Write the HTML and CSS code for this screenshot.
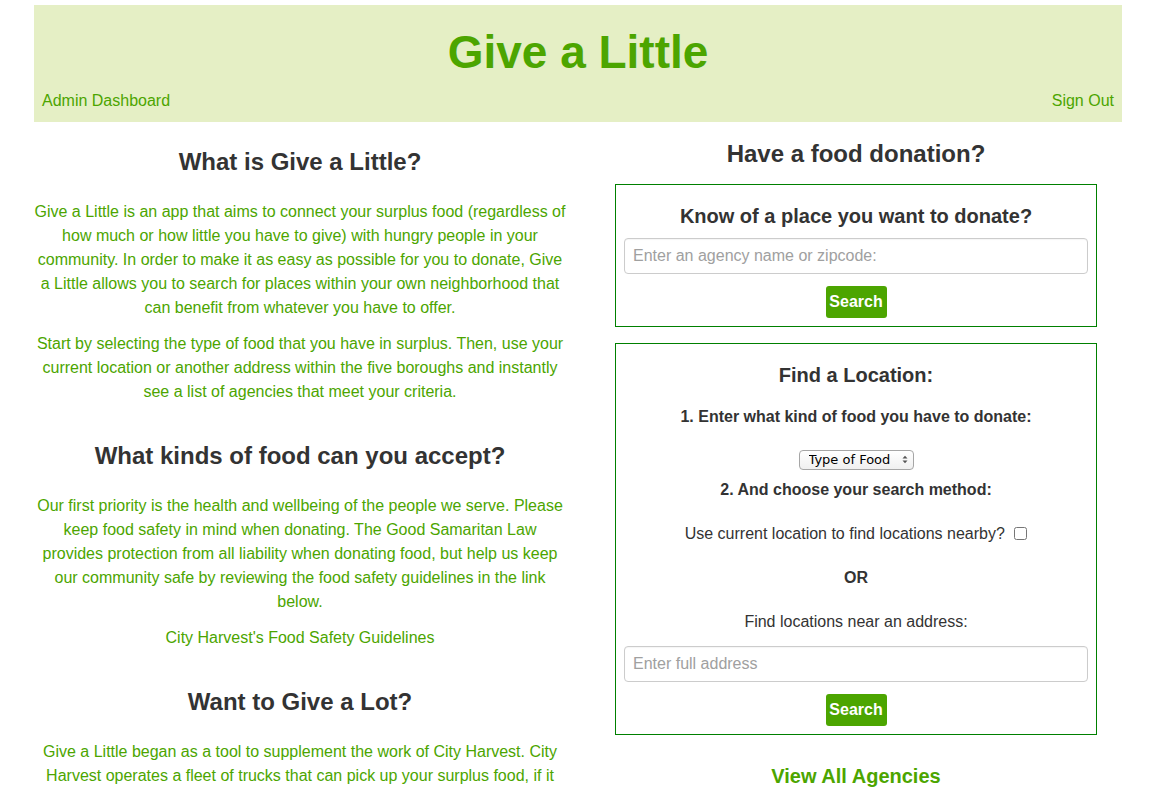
FILE: index.html
```html
<!DOCTYPE html>
<html lang="en">
<head>
<meta charset="utf-8">
<title>Give a Little</title>
<link rel="stylesheet" href="styles.css">
</head>
<body>
<div class="page">
  <header class="masthead">
    <h1 class="brand">Give a Little</h1>
    <nav class="nav">
      <a href="#" class="nav-link">Admin Dashboard</a>
      <a href="#" class="nav-link">Sign Out</a>
    </nav>
  </header>

  <main class="columns">
    <section class="col-info">
      <h3 class="heading">What is Give a Little?</h3>
      <p class="copy">Give a Little is an app that aims to connect your surplus food (regardless of how much or how little you have to give) with hungry people in your community. In order to make it as easy as possible for you to donate, Give a Little allows you to search for places within your own neighborhood that can benefit from whatever you have to offer.</p>
      <p class="copy">Start by selecting the type of food that you have in surplus. Then, use your current location or another address within the five boroughs and instantly see a list of agencies that meet your criteria.</p>

      <h3 class="heading heading-spaced">What kinds of food can you accept?</h3>
      <p class="copy">Our first priority is the health and wellbeing of the people we serve. Please keep food safety in mind when donating. The Good Samaritan Law provides protection from all liability when donating food, but help us keep our community safe by reviewing the food safety guidelines in the link below.</p>
      <p class="copy"><a href="#" class="text-link">City Harvest's Food Safety Guidelines</a></p>

      <h3 class="heading heading-spaced">Want to Give a Lot?</h3>
      <p class="copy">Give a Little began as a tool to supplement the work of City Harvest. City Harvest operates a fleet of trucks that can pick up your surplus food, if it meets their requirements for donation. Learn more about donating with City Harvest below.</p>
    </section>

    <section class="col-search">
      <h3 class="heading heading-right">Have a food donation?</h3>

      <div class="panel">
        <h4 class="panel-title">Know of a place you want to donate?</h4>
        <input class="field" type="text" placeholder="Enter an agency name or zipcode:">
        <div class="btn-row"><button class="btn">Search</button></div>
      </div>

      <div class="panel panel-second">
        <h4 class="panel-title">Find a Location:</h4>
        <p class="step">1. Enter what kind of food you have to donate:</p>
        <div class="select-row">
          <span class="select-wrap">
            <select class="select">
              <option>Type of Food</option>
            </select>
            <svg class="select-arrows" width="6" height="9" viewBox="0 0 6 9"><path d="M0.5 3.5 L3 0.8 L5.5 3.5 Z M0.5 5.5 L3 8.2 L5.5 5.5 Z" fill="#555"/></svg>
          </span>
        </div>
        <p class="step step-tight">2. And choose your search method:</p>
        <p class="line">Use current location to find locations nearby? <input type="checkbox" class="check"></p>
        <p class="line line-bold">OR</p>
        <p class="line">Find locations near an address:</p>
        <input class="field field-address" type="text" placeholder="Enter full address">
        <div class="btn-row"><button class="btn">Search</button></div>
      </div>

      <h4 class="all-link"><a href="#" class="text-link">View All Agencies</a></h4>
    </section>
  </main>
</div>
</body>
</html>
```

FILE: styles.css
```css
* { box-sizing: border-box; }

html, body {
  margin: 0;
  padding: 0;
  background: #ffffff;
}

body {
  font-family: "Liberation Sans", Arial, Helvetica, sans-serif;
  font-size: 16px;
  color: #333333;
}

.page {
  padding: 5px 36px 0 34px;
}

.masthead {
  background: #e5efc5;
  height: 117px;
  padding: 21px 8px 0 8px;
}

.brand {
  margin: 0;
  text-align: center;
  font-size: 46px;
  line-height: 52px;
  font-weight: bold;
  color: #4ca500;
}

.nav {
  display: flex;
  justify-content: space-between;
  margin-top: 13px;
  line-height: 20px;
}

.nav-link {
  color: #4ca500;
  text-decoration: none;
  font-size: 16px;
}

.columns {
  display: grid;
  grid-template-columns: 532px 512px;
  column-gap: 34px;
}

.heading {
  margin: 27px 0 25px 0;
  text-align: center;
  font-size: 24px;
  line-height: 26px;
  font-weight: bold;
  color: #333333;
}

.heading-spaced {
  margin-top: 39px;
}

.heading-right {
  margin: 19px 0 17px 0;
}

.copy {
  margin: 0 0 12px 0;
  text-align: center;
  font-size: 16px;
  line-height: 24px;
  color: #4ca500;
}

.text-link {
  color: #4ca500;
  text-decoration: none;
}

.panel {
  border: 1px solid #008000;
  margin: 0 15px 0 15px;
  padding: 20px 8px 8px 8px;
  text-align: center;
}

.panel-second {
  margin-top: 16px;
}

.panel-title {
  margin: 0 0 11px 0;
  font-size: 20px;
  line-height: 22px;
  font-weight: bold;
  color: #333333;
}

.field {
  display: block;
  width: 100%;
  height: 36px;
  padding: 6px 8px;
  border: 1px solid #cccccc;
  border-radius: 4px;
  font-family: "Liberation Sans", Arial, sans-serif;
  font-size: 16px;
  color: #555555;
  background: #ffffff;
  box-shadow: inset 0 1px 1px rgba(0,0,0,0.04);
}

.field::placeholder {
  color: #a0a0a0;
}

.btn-row {
  display: flex;
  justify-content: center;
  margin-top: 12px;
}

.btn {
  height: 32px;
  width: 61px;
  padding: 0;
  border: none;
  border-radius: 3px;
  background: #4ca500;
  color: #ffffff;
  font-family: "Liberation Sans", Arial, sans-serif;
  font-size: 16px;
  font-weight: bold;
}

.step {
  margin: 21px 0 0 0;
  font-size: 16px;
  line-height: 20px;
  font-weight: bold;
  color: #333333;
}

.step-tight {
  margin-top: 10px;
}

.select-row {
  display: flex;
  justify-content: center;
  margin-top: 23px;
}

.select-wrap {
  position: relative;
  display: inline-block;
  width: 115px;
  height: 20px;
}

.select {
  appearance: none;
  -webkit-appearance: none;
  width: 115px;
  height: 20px;
  margin: 0;
  padding: 0 0 0 9px;
  border: 1px solid #a6a6a6;
  border-radius: 4px;
  background: linear-gradient(#ffffff, #f0f0f0);
  font-family: "DejaVu Sans", Arial, sans-serif;
  font-size: 13px;
  line-height: 18px;
  color: #000000;
}

.select-arrows {
  position: absolute;
  right: 6px;
  top: 5px;
  pointer-events: none;
}

.line {
  margin: 24px 0 0 0;
  font-size: 16px;
  line-height: 20px;
  color: #333333;
}

.line-bold {
  font-weight: bold;
}

.check {
  width: 13px;
  height: 13px;
  margin: 0 0 0 5px;
  vertical-align: -1px;
}

.field-address {
  margin-top: 14px;
}

.all-link {
  margin: 30px 0 0 0;
  text-align: center;
  font-size: 20px;
  line-height: 22px;
  font-weight: bold;
}
```
